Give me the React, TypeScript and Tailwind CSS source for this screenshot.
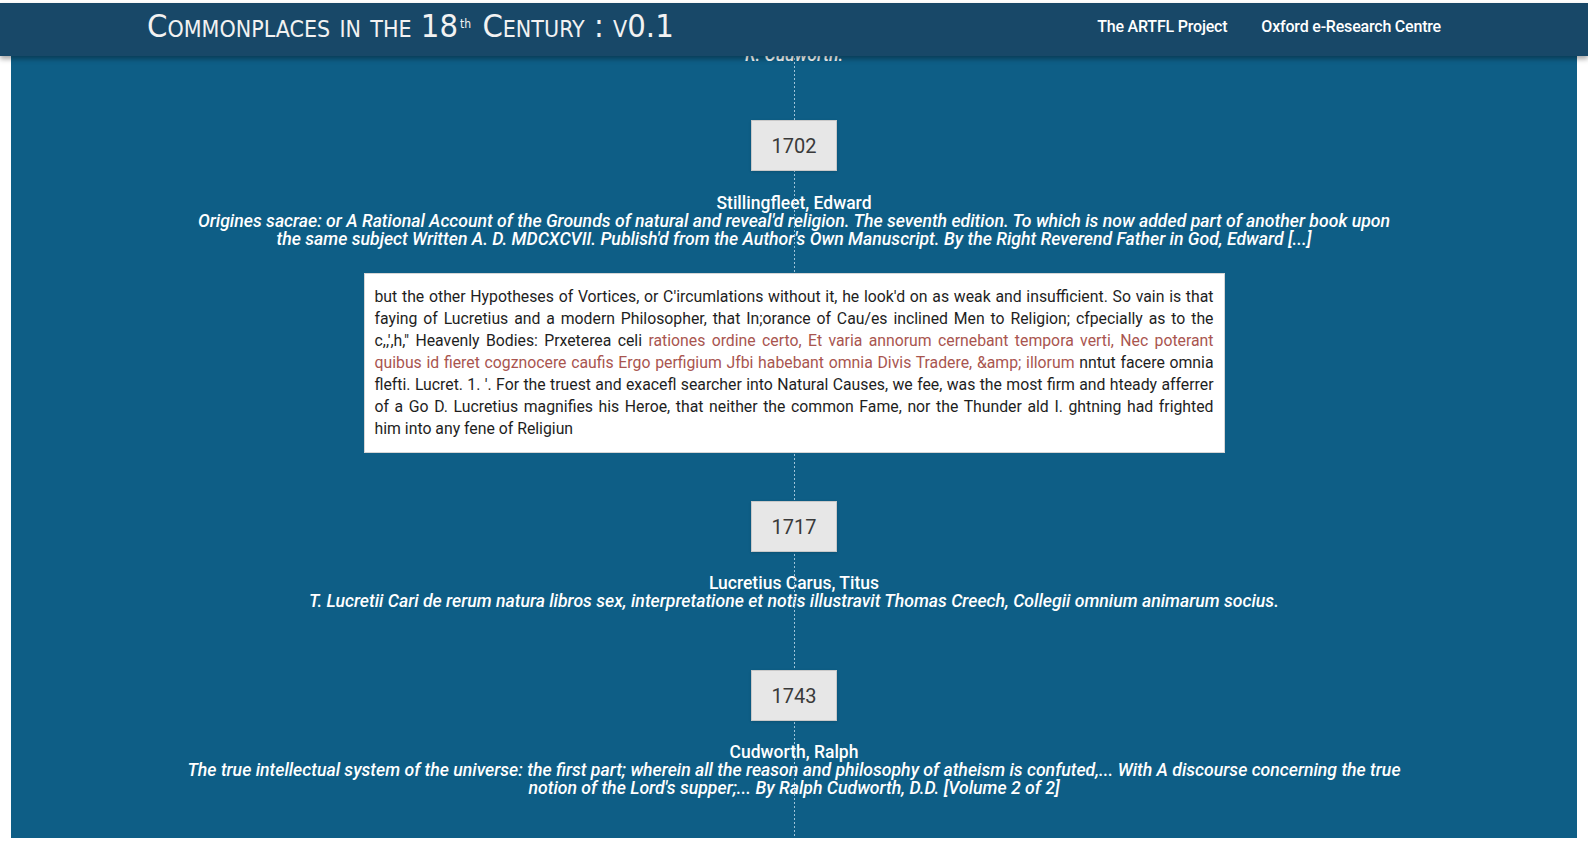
import React from 'react';

interface Segment {
  text: string;
  red?: boolean;
}

interface Entry {
  year: string;
  author: string;
  title: string[];
  quote?: Segment[][];
  gapTop: string;
  authorGap: string;
}

const entries: Entry[] = [
  {
    year: '1702',
    author: 'Stillingfleet, Edward',
    title: [
      "Origines sacrae: or A Rational Account of the Grounds of natural and reveal'd religion. The seventh edition. To which is now added part of another book upon",
      "the same subject Written A. D. MDCXCVII. Publish'd from the Author's Own Manuscript. By the Right Reverend Father in God, Edward [...]",
    ],
    quote: [
      [{ text: "but the other Hypotheses of Vortices, or C'ircumlations without it, he look'd on as weak and insufficient. So vain is that" }],
      [{ text: 'faying of Lucretius and a modern Philosopher, that In;orance of Cau/es inclined Men to Religion; cfpecially as to the' }],
      [
        { text: 'c,,\',h," Heavenly Bodies: Prxeterea celi ' },
        { text: 'rationes ordine certo, Et varia annorum cernebant tempora verti, Nec poterant', red: true },
      ],
      [
        { text: 'quibus id fieret cogznocere caufis Ergo perfigium Jfbi habebant omnia Divis Tradere, &amp; illorum', red: true },
        { text: ' nntut facere omnia' },
      ],
      [{ text: "flefti. Lucret. 1. '. For the truest and exacefl searcher into Natural Causes, we fee, was the most firm and hteady afferrer" }],
      [{ text: 'of a Go D. Lucretius magnifies his Heroe, that neither the common Fame, nor the Thunder ald I. ghtning had frighted' }],
      [{ text: 'him into any fene of Religiun' }],
    ],
    gapTop: 'mt-[56px]',
    authorGap: 'mt-[23px]',
  },
  {
    year: '1717',
    author: 'Lucretius Carus, Titus',
    title: [
      'T. Lucretii Cari de rerum natura libros sex, interpretatione et notis illustravit Thomas Creech, Collegii omnium animarum socius.',
    ],
    gapTop: 'mt-[48px]',
    authorGap: 'mt-[22px]',
  },
  {
    year: '1743',
    author: 'Cudworth, Ralph',
    title: [
      'The true intellectual system of the universe: the first part; wherein all the reason and philosophy of atheism is confuted,... With A discourse concerning the true',
      "notion of the Lord's supper;... By Ralph Cudworth, D.D. [Volume 2 of 2]",
    ],
    gapTop: 'mt-[60px]',
    authorGap: 'mt-[22px]',
  },
];

const roboto = { fontFamily: 'Roboto, "Liberation Sans", sans-serif' };

const TimelineEntry: React.FC<{ entry: Entry }> = ({ entry }) => {
  return (
    <div className={`flex flex-col items-center ${entry.gapTop}`}>
      <div className="relative z-10 flex h-[51px] w-[86px] items-center justify-center border border-[#c9c9c9] bg-[#e7e7e7] text-[20px] text-[#3a3a3a] shadow-sm">
        {entry.year}
      </div>
      <div className={`${entry.authorGap} text-center text-[17.5px] leading-[18px] font-medium text-white`}>{entry.author}</div>
      <div className="text-center text-[17.65px] leading-[18px] font-medium italic text-white">
        {entry.title.map((line, i) => (
          <div key={i} className="whitespace-nowrap">
            {line}
          </div>
        ))}
      </div>
      {entry.quote && (
        <div className="relative z-10 mt-[25px] w-[861px] border border-[#d6d6d6] bg-white px-[10px] py-[12px] text-[15.8px] leading-[22px] text-[#1e1e1e]">
          {entry.quote.map((line, i) => (
            <div
              key={i}
              className={`whitespace-nowrap ${i < entry.quote!.length - 1 ? 'text-justify [text-align-last:justify]' : 'text-left'}`}
            >
              {line.map((seg, j) => (
                <span key={j} className={seg.red ? 'text-[#a9554f]' : ''}>
                  {seg.text}
                </span>
              ))}
            </div>
          ))}
        </div>
      )}
    </div>
  );
};

export default function App() {
  return (
    <div className="h-[848px] overflow-hidden bg-white pt-[3px]" style={roboto}>
      <header className="relative z-20 flex h-[53px] items-center justify-between bg-[#184868] px-[147px] pb-[6px] shadow-[0_3px_5px_rgba(0,0,0,0.35)]">
        <h1
          className="text-[32.5px] leading-none text-[#f2f2f2] [font-variant:small-caps]"
          style={{ fontFamily: '"Liberation Sans Narrow", "DejaVu Sans Condensed", Roboto, sans-serif' }}
        >
          Commonplaces in the 18
          <span className="relative -top-[9px] ml-[2px] mr-[2px] text-[12px] [font-variant:normal]">th</span> Century : v0.1
        </h1>
        <nav className="flex items-center gap-[34px] text-[16px] font-medium tracking-[-0.2px] text-white">
          <a href="#">The ARTFL Project</a>
          <a href="#">Oxford e-Research Centre</a>
        </nav>
      </header>

      <main className="relative mx-[11px] min-h-[792px] bg-[#0e5e86] pb-10">
        <div className="absolute top-0 bottom-0 left-1/2 w-px bg-[repeating-linear-gradient(to_bottom,#9fc3d8_0_2px,transparent_2px_4px)]" />
        <div className="-mt-[10px] text-center text-[17.5px] leading-[18px] font-medium italic text-white">R. Cudworth.</div>
        {entries.map((e) => (
          <TimelineEntry key={e.year} entry={e} />
        ))}
      </main>
    </div>
  );
}
